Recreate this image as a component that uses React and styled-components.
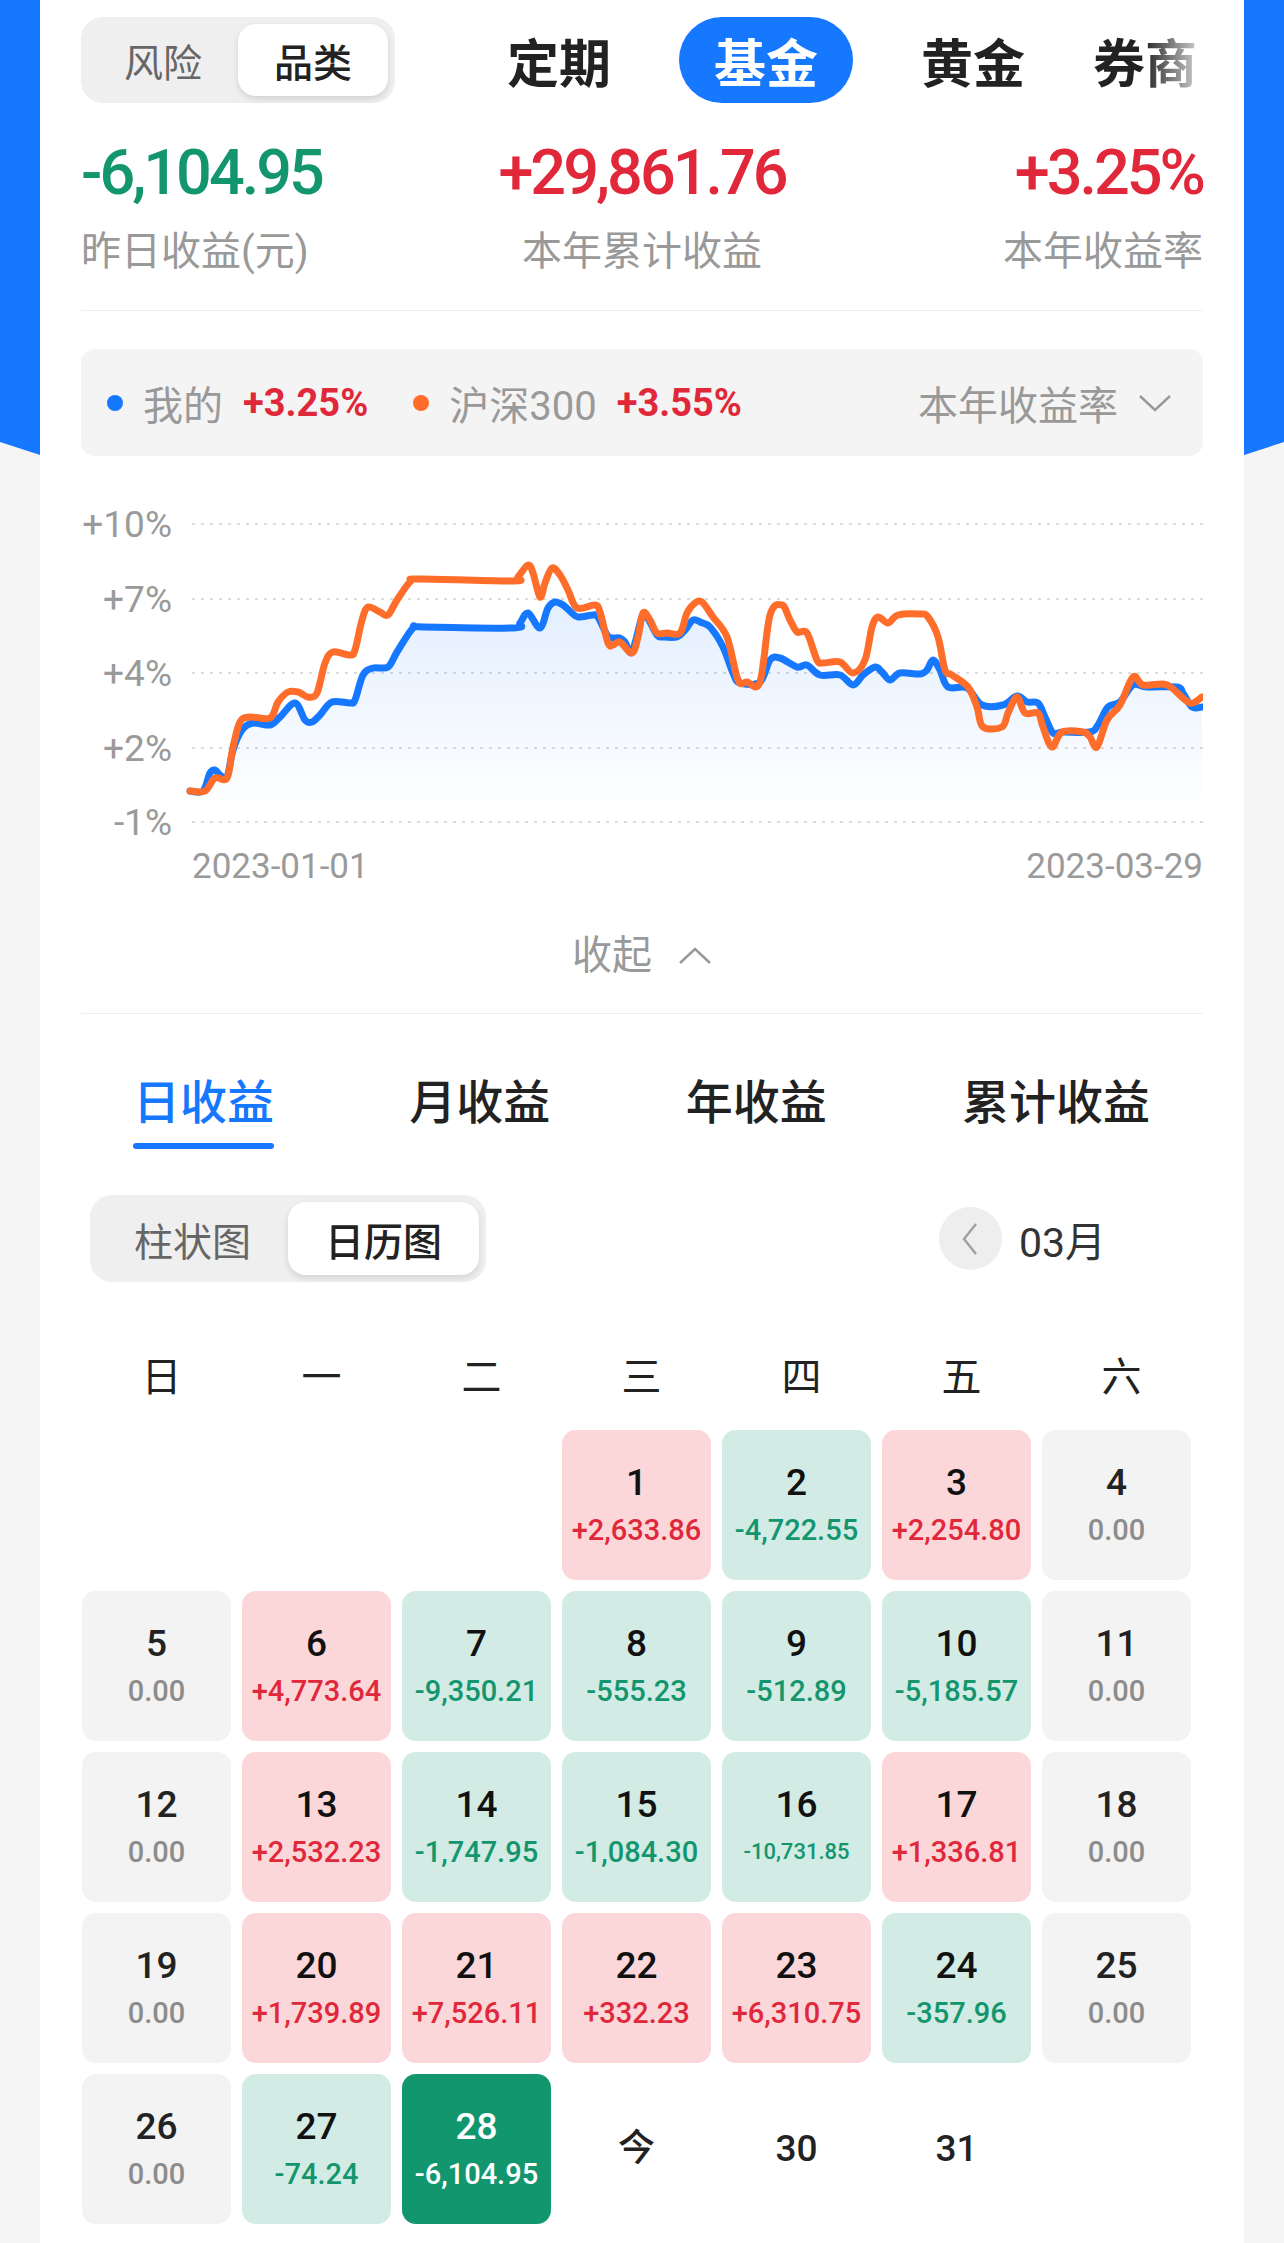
import React from "react";
import styled, { createGlobalStyle, css } from "styled-components";

const GlobalStyle = createGlobalStyle`
  html, body { margin: 0; padding: 0; }
  body {
    background: #f5f5f5;
    font-family: Roboto, "Noto Sans CJK SC", sans-serif;
    -webkit-font-smoothing: antialiased;
  }
  * { box-sizing: border-box; }
`;

const BLUE = "#1677ff";
const RED = "#e0283a";
const GREEN = "#13966e";

const Page = styled.div`
  position: relative;
  min-height: 2243px;
  background: #f5f5f5;
  padding: 0 40px;
  overflow: hidden;
  &::before {
    content: "";
    position: absolute;
    left: 0;
    top: 0;
    right: 0;
    height: 700px;
    background: ${BLUE};
    clip-path: polygon(0 0, 100% 0, 100% 442px, 50% 650px, 0 442px);
  }
`;

const Card = styled.main`
  position: relative;
  background: #fff;
  min-height: 2243px;
  padding: 17px 41px 20px;
`;

const TopBar = styled.div`
  display: flex;
  align-items: center;
  height: 86px;
`;

const Segmented = styled.div`
  display: flex;
  flex-shrink: 0;
  background: #efefef;
  border-radius: 22px;
  padding: 7px;
  height: ${(p) => p.$h}px;
  margin-left: ${(p) => p.$ml || 0}px;
`;

const SegItem = styled.div`
  width: ${(p) => p.$w}px;
  display: flex;
  align-items: center;
  justify-content: center;
  font-size: 39px;
  color: #666;
  border-radius: 18px;
  ${(p) =>
    p.$active &&
    css`
      background: #fff;
      color: #222;
      font-weight: 500;
      box-shadow: 0 3px 6px rgba(0, 0, 0, 0.12);
    `}
`;

const Tabs = styled.div`
  flex: 1;
  display: flex;
  align-items: center;
  gap: 68px;
  margin-left: 112px;
  overflow: hidden;
  -webkit-mask-image: linear-gradient(to right, #000 calc(100% - 60px), rgba(0, 0, 0, 0.15) 100%);
  mask-image: linear-gradient(to right, #000 calc(100% - 60px), rgba(0, 0, 0, 0.15) 100%);
`;

const Tab = styled.div`
  flex-shrink: 0;
  height: 86px;
  display: flex;
  align-items: center;
  font-size: 52px;
  font-weight: 700;
  color: #222;
  white-space: nowrap;
  ${(p) =>
    p.$active &&
    css`
      background: ${BLUE};
      color: #fff;
      padding: 0 35px;
      border-radius: 43px;
    `}
`;

const Stats = styled.div`
  display: grid;
  grid-template-columns: 1fr auto 1fr;
  margin-top: 38px;
`;

const Stat = styled.div`
  display: flex;
  flex-direction: column;
  align-items: ${(p) => p.$align};
`;

const BigNum = styled.div`
  font-size: 63px;
  line-height: 64px;
  font-weight: 500;
  letter-spacing: -3px;
  color: ${(p) => p.$color};
`;

const StatLabel = styled.div`
  margin-top: 24px;
  font-size: 40px;
  line-height: 46px;
  color: #999;
`;

const Divider = styled.div`
  height: 1px;
  background: #efefef;
  margin-top: ${(p) => p.$mt}px;
`;

const Legend = styled.div`
  margin-top: 38px;
  height: 107px;
  background: #f4f4f4;
  border-radius: 14px;
  display: flex;
  align-items: center;
  padding: 0 31px 0 26px;
`;

const Dot = styled.span`
  width: 16px;
  height: 16px;
  border-radius: 50%;
  background: ${(p) => p.$color};
  margin-left: ${(p) => p.$ml || 0}px;
  flex-shrink: 0;
`;

const LegendName = styled.span`
  font-size: 40px;
  color: #999;
  margin-left: 20px;
`;

const LegendVal = styled.span`
  font-size: 38px;
  font-weight: 700;
  color: ${RED};
  margin-left: 20px;
`;

const LegendRight = styled.div`
  margin-left: auto;
  display: flex;
  align-items: center;
  gap: 20px;
  font-size: 40px;
  color: #999;
`;

const ChartSvg = styled.svg`
  display: block;
  margin-top: 44px;
  font-family: Roboto, sans-serif;
`;

const Collapse = styled.div`
  margin-top: 38px;
  display: flex;
  align-items: center;
  justify-content: center;
  gap: 26px;
  font-size: 40px;
  line-height: 56px;
  color: #999;
`;

const PeriodTabs = styled.div`
  margin-top: 59px;
  display: flex;
  justify-content: space-between;
  padding: 0 53px 0 52px;
`;

const PeriodTab = styled.div`
  display: flex;
  flex-direction: column;
  align-items: center;
  font-size: 47px;
  line-height: 60px;
  font-weight: 500;
  color: ${(p) => (p.$active ? BLUE : "#222")};
  &::after {
    content: "";
    margin-top: 10px;
    width: 100%;
    height: 6px;
    border-radius: 3px;
    background: ${(p) => (p.$active ? BLUE : "transparent")};
  }
`;

const ToolRow = styled.div`
  margin-top: 46px;
  display: flex;
  align-items: center;
  justify-content: space-between;
  padding-right: 97px;
`;

const MonthPicker = styled.div`
  display: flex;
  align-items: center;
  gap: 17px;
  font-size: 41px;
  color: #333;
`;

const Circle = styled.div`
  width: 63px;
  height: 63px;
  border-radius: 50%;
  background: #eeeeee;
  display: flex;
  align-items: center;
  justify-content: center;
`;

const Week = styled.div`
  margin-top: 68px;
  margin-left: 1px;
  display: grid;
  grid-template-columns: repeat(7, 149px);
  column-gap: 11px;
`;

const WeekDay = styled.div`
  text-align: center;
  padding-left: 10px;
  font-size: 40px;
  line-height: 56px;
  color: #222;
`;

const Grid = styled.div`
  margin-top: 24px;
  margin-left: 1px;
  display: grid;
  grid-template-columns: repeat(7, 149px);
  grid-auto-rows: 150px;
  gap: 11px;
`;

const cellThemes = {
  red: { bg: "#fbd7da", num: "#111", val: RED },
  green: { bg: "#d2ebe4", num: "#111", val: GREEN },
  gray: { bg: "#f3f3f3", num: "#222", val: "#8c8c8c" },
  sel: { bg: "#12966e", num: "#fff", val: "#fff" },
  plain: { bg: "transparent", num: "#222", val: "#222" },
};

const Cell = styled.div`
  border-radius: 14px;
  background: ${(p) => cellThemes[p.$type].bg};
  display: flex;
  flex-direction: column;
  align-items: center;
  justify-content: center;
`;

const DayNum = styled.div`
  font-size: 37px;
  line-height: 44px;
  font-weight: 500;
  color: ${(p) => cellThemes[p.$type].num};
`;

const DayVal = styled.div`
  margin-top: 6px;
  font-size: ${(p) => (p.$small ? 22 : 29)}px;
  line-height: 38px;
  font-weight: 500;
  color: ${(p) => cellThemes[p.$type].val};
`;

/* ---------- chart data (page pixel coordinates) ---------- */
const bluePts = [
  [190, 791], [203, 791], [210, 773], [215, 770], [220, 775], [227, 777], [233, 750], [242, 730],
  [253, 723], [270, 725], [280, 717], [295, 703], [305, 720], [312, 722], [320, 715], [332, 702],
  [350, 703], [355, 700], [363, 675], [373, 668], [388, 667], [397, 652], [413, 628], [423, 627],
  [513, 628], [520, 623], [528, 613], [540, 628], [548, 608], [555, 602], [563, 605], [572, 613],
  [578, 617], [593, 615], [598, 617], [607, 635], [612, 638], [620, 638], [625, 642], [632, 652],
  [642, 617], [647, 617], [657, 635], [663, 637], [677, 637], [685, 630], [693, 620], [700, 622],
  [710, 627], [723, 647], [733, 673], [740, 683], [760, 682], [770, 660], [780, 658], [797, 667],
  [807, 665], [820, 675], [840, 675], [853, 685], [863, 675], [875, 667], [882, 672], [890, 680],
  [900, 673], [920, 674], [927, 670], [933, 660], [940, 670], [948, 687], [967, 688], [982, 705],
  [1003, 705], [1017, 696], [1027, 702], [1038, 703], [1045, 717], [1053, 733], [1063, 732],
  [1090, 732], [1098, 725], [1108, 707], [1120, 702], [1133, 685], [1147, 687], [1177, 687],
  [1183, 693], [1192, 707], [1202, 707],
];
const orangePts = [
  [190, 791], [205, 791], [215, 778], [227, 778], [233, 747], [240, 722], [250, 717], [270, 718],
  [278, 702], [288, 692], [298, 692], [308, 697], [317, 693], [325, 663], [333, 652], [350, 655],
  [355, 650], [362, 620], [368, 607], [380, 612], [388, 615], [397, 600], [410, 582], [420, 579],
  [513, 581], [518, 577], [528, 565], [533, 573], [540, 597], [545, 583], [552, 568], [560, 575],
  [568, 590], [577, 608], [595, 605], [600, 612], [608, 643], [613, 645], [620, 642], [632, 653],
  [638, 637], [643, 613], [650, 620], [657, 633], [667, 633], [680, 633], [687, 613], [695, 603],
  [702, 602], [713, 617], [727, 637], [738, 680], [747, 682], [760, 682], [770, 615], [782, 605],
  [790, 620], [797, 632], [807, 633], [817, 660], [823, 663], [840, 662], [853, 673], [865, 660],
  [872, 627], [878, 617], [888, 623], [898, 615], [920, 614], [928, 617], [938, 637], [945, 670],
  [952, 675], [968, 687], [977, 707], [983, 727], [1002, 727], [1008, 713], [1017, 697],
  [1025, 713], [1038, 713], [1043, 727], [1052, 747], [1062, 732], [1083, 732], [1090, 737],
  [1097, 747], [1107, 720], [1120, 705], [1133, 677], [1143, 685], [1163, 684], [1172, 688],
  [1190, 703], [1202, 697],
];

function smoothPath(pts) {
  const f = (n) => n.toFixed(1);
  let d = `M${f(pts[0][0])},${f(pts[0][1])}`;
  for (let i = 0; i < pts.length - 1; i++) {
    const p0 = pts[i - 1] || pts[i];
    const p1 = pts[i];
    const p2 = pts[i + 1];
    const p3 = pts[i + 2] || p2;
    const t = 1 / 6;
    d += ` C${f(p1[0] + (p2[0] - p0[0]) * t)},${f(p1[1] + (p2[1] - p0[1]) * t)} ${f(
      p2[0] - (p3[0] - p1[0]) * t
    )},${f(p2[1] - (p3[1] - p1[1]) * t)} ${f(p2[0])},${f(p2[1])}`;
  }
  return d;
}

const gridRows = [
  { y: 524, label: "+10%" },
  { y: 599, label: "+7%" },
  { y: 673, label: "+4%" },
  { y: 748, label: "+2%" },
  { y: 822, label: "-1%" },
];

function Chart() {
  const blue = smoothPath(bluePts);
  const orange = smoothPath(orangePts);
  return (
    <ChartSvg width="1122" height="390" viewBox="81 500 1122 390">
      <defs>
        <linearGradient id="area" x1="0" y1="600" x2="0" y2="815" gradientUnits="userSpaceOnUse">
          <stop offset="0" stopColor="#1677ff" stopOpacity="0.12" />
          <stop offset="1" stopColor="#1677ff" stopOpacity="0" />
        </linearGradient>
      </defs>
      {gridRows.map((r) => (
        <g key={r.label}>
          <line x1={192} x2={1203} y1={r.y} y2={r.y} stroke="#dcdcdc" strokeWidth="2" strokeDasharray="3 6" />
          <text x={172} y={r.y} textAnchor="end" dominantBaseline="central" fontSize="37" fill="#9a9a9a">
            {r.label}
          </text>
        </g>
      ))}
      <path d={`${blue} L1202,815 L190,815 Z`} fill="url(#area)" />
      <path d={blue} fill="none" stroke="#1677ff" strokeWidth="7" strokeLinejoin="round" strokeLinecap="round" />
      <path d={orange} fill="none" stroke="#ff6d2a" strokeWidth="7" strokeLinejoin="round" strokeLinecap="round" />
      <text x={192} y={866} dominantBaseline="central" fontSize="35" fill="#9a9a9a">
        2023-01-01
      </text>
      <text x={1203} y={866} textAnchor="end" dominantBaseline="central" fontSize="35" fill="#9a9a9a">
        2023-03-29
      </text>
    </ChartSvg>
  );
}

const ChevronDown = () => (
  <svg width="34" height="18" viewBox="0 0 34 18">
    <polyline points="2,2 17,16 32,2" fill="none" stroke="#999" strokeWidth="2.4" />
  </svg>
);
const ChevronUp = () => (
  <svg width="34" height="18" viewBox="0 0 34 18">
    <polyline points="2,16 17,2 32,16" fill="none" stroke="#999" strokeWidth="2.4" />
  </svg>
);
const ChevronLeft = () => (
  <svg width="16" height="34" viewBox="0 0 16 34">
    <polyline points="14,2 2,17 14,32" fill="none" stroke="#a0a0a0" strokeWidth="2.4" />
  </svg>
);

const days = [
  null, null, null,
  [1, "red", "+2,633.86"], [2, "green", "-4,722.55"], [3, "red", "+2,254.80"], [4, "gray", "0.00"],
  [5, "gray", "0.00"], [6, "red", "+4,773.64"], [7, "green", "-9,350.21"], [8, "green", "-555.23"],
  [9, "green", "-512.89"], [10, "green", "-5,185.57"], [11, "gray", "0.00"],
  [12, "gray", "0.00"], [13, "red", "+2,532.23"], [14, "green", "-1,747.95"], [15, "green", "-1,084.30"],
  [16, "green", "-10,731.85", true], [17, "red", "+1,336.81"], [18, "gray", "0.00"],
  [19, "gray", "0.00"], [20, "red", "+1,739.89"], [21, "red", "+7,526.11"], [22, "red", "+332.23"],
  [23, "red", "+6,310.75"], [24, "green", "-357.96"], [25, "gray", "0.00"],
  [26, "gray", "0.00"], [27, "green", "-74.24"], [28, "sel", "-6,104.95"],
  ["今", "plain"], [30, "plain"], [31, "plain"],
];

export default function App() {
  return (
    <>
      <GlobalStyle />
      <Page>
        <Card>
          <TopBar>
            <Segmented $h={86}>
              <SegItem $w={150}>风险</SegItem>
              <SegItem $w={150} $active>品类</SegItem>
            </Segmented>
            <Tabs>
              <Tab>定期</Tab>
              <Tab $active>基金</Tab>
              <Tab>黄金</Tab>
              <Tab>券商</Tab>
            </Tabs>
          </TopBar>

          <Stats>
            <Stat $align="flex-start">
              <BigNum $color={GREEN}>-6,104.95</BigNum>
              <StatLabel>昨日收益(元)</StatLabel>
            </Stat>
            <Stat $align="center">
              <BigNum $color={RED}>+29,861.76</BigNum>
              <StatLabel>本年累计收益</StatLabel>
            </Stat>
            <Stat $align="flex-end">
              <BigNum $color={RED}>+3.25%</BigNum>
              <StatLabel>本年收益率</StatLabel>
            </Stat>
          </Stats>

          <Divider $mt={35} />

          <Legend>
            <Dot $color="#1677ff" />
            <LegendName>我的</LegendName>
            <LegendVal>+3.25%</LegendVal>
            <Dot $color="#ff6d2a" $ml={45} />
            <LegendName>沪深300</LegendName>
            <LegendVal>+3.55%</LegendVal>
            <LegendRight>
              本年收益率
              <ChevronDown />
            </LegendRight>
          </Legend>

          <Chart />

          <Collapse>
            收起
            <ChevronUp />
          </Collapse>

          <Divider $mt={29} />

          <PeriodTabs>
            <PeriodTab $active>日收益</PeriodTab>
            <PeriodTab>月收益</PeriodTab>
            <PeriodTab>年收益</PeriodTab>
            <PeriodTab>累计收益</PeriodTab>
          </PeriodTabs>

          <ToolRow>
            <Segmented $h={87} $ml={9}>
              <SegItem $w={191}>柱状图</SegItem>
              <SegItem $w={191} $active>日历图</SegItem>
            </Segmented>
            <MonthPicker>
              <Circle>
                <ChevronLeft />
              </Circle>
              03月
            </MonthPicker>
          </ToolRow>

          <Week>
            {["日", "一", "二", "三", "四", "五", "六"].map((d) => (
              <WeekDay key={d}>{d}</WeekDay>
            ))}
          </Week>

          <Grid>
            {days.map((d, i) =>
              d ? (
                <Cell key={i} $type={d[1]}>
                  <DayNum $type={d[1]}>{d[0]}</DayNum>
                  {d[2] && (
                    <DayVal $type={d[1]} $small={d[3]}>
                      {d[2]}
                    </DayVal>
                  )}
                </Cell>
              ) : (
                <div key={i} />
              )
            )}
          </Grid>
        </Card>
      </Page>
    </>
  );
}
